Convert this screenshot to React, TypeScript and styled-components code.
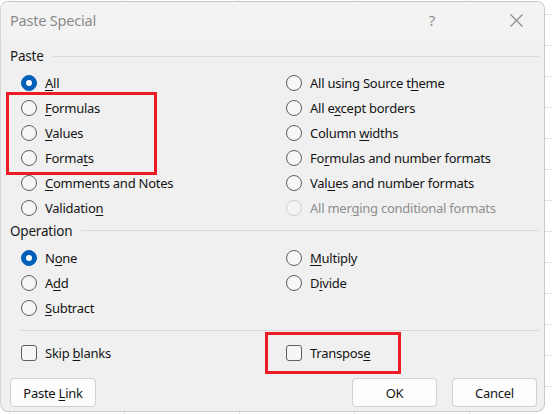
import React, { FC } from "react";
import styled, { createGlobalStyle } from "styled-components";

const GlobalStyle = createGlobalStyle`
  html, body {
    margin: 0;
    padding: 0;
    width: 552px;
    height: 414px;
    overflow: hidden;
    background-color: #ffffff;
    background-image:
      linear-gradient(#e2e2e2 1px, transparent 1px),
      linear-gradient(90deg, #e2e2e2 1px, transparent 1px);
    background-size: 100% 31px, 115px 100%;
    background-position: 0 14px, 9px 0;
    font-family: "Noto Sans", "Open Sans", sans-serif;
  }
`;

const Page = styled.div`
  width: 552px;
  height: 414px;
  padding: 1px 0 0 0;
  box-sizing: border-box;
`;

const Dialog = styled.div`
  position: relative;
  width: 545px;
  height: 411px;
  box-sizing: border-box;
  border: 1px solid #c9c9c9;
  border-left: 1px solid #d6d6d6;
  border-radius: 8px;
  background: #f0f0f0;
  overflow: hidden;
  display: flex;
  flex-direction: column;
`;

const TitleBar = styled.div`
  height: 38px;
  flex: none;
  box-sizing: border-box;
  display: flex;
  align-items: center;
  padding: 0 0 2px 9px;
  background: #f3f3f3;
`;

const Title = styled.div`
  flex: 1;
  font-size: 14.5px;
  letter-spacing: -0.2px;
  color: #8a8a8a;
`;

const TitleButton = styled.div<{ $w: number; $gap?: number }>`
  width: ${(p) => p.$w}px;
  height: 36px;
  margin-right: ${(p) => p.$gap ?? 0}px;
  display: flex;
  align-items: center;
  justify-content: center;
  color: #8f8f8f;
  font-size: 15px;
`;

const Body = styled.div`
  flex: 1;
  display: flex;
  flex-direction: column;
  padding: 6px 5px 0 9px;
`;

const SectionHead = styled.div`
  height: 20px;
  display: flex;
  align-items: center;
  gap: 9px;
  font-size: 13.5px;
  letter-spacing: -0.2px;
  color: #1a1a1a;

  &::after {
    content: "";
    flex: 1;
    height: 1px;
    background: #d9d9d9;
  }
`;

const OptionGrid = styled.div<{ $rows: number }>`
  margin-top: 4.5px;
  padding-left: 11px;
  display: grid;
  grid-template-columns: 265px 1fr;
  grid-template-rows: repeat(${(p) => p.$rows}, 25px);
  grid-auto-flow: column;
`;

const Option = styled.label<{ $disabled?: boolean }>`
  display: flex;
  align-items: center;
  gap: 8px;
  font-size: 13px;
  letter-spacing: -0.25px;
  color: ${(p) => (p.$disabled ? "#8d8d8d" : "#141414")};
  white-space: nowrap;

  u {
    text-decoration-thickness: 1px;
    text-underline-offset: 2px;
  }
`;

const Radio = styled.span<{ $checked?: boolean; $disabled?: boolean }>`
  width: 16px;
  height: 16px;
  flex: none;
  box-sizing: border-box;
  border-radius: 50%;
  border: 1px solid
    ${(p) => (p.$checked ? "#005fb8" : p.$disabled ? "#d0d0d0" : "#5f5f5f")};
  background: ${(p) => (p.$checked ? "#005fb8" : p.$disabled ? "#f4f4f4" : "#f6f6f6")};
  display: flex;
  align-items: center;
  justify-content: center;

  &::after {
    content: "";
    display: ${(p) => (p.$checked ? "block" : "none")};
    width: 6px;
    height: 6px;
    border-radius: 50%;
    background: #ffffff;
  }
`;

const Checkbox = styled.span`
  width: 16px;
  height: 16px;
  flex: none;
  box-sizing: border-box;
  border-radius: 3px;
  border: 1px solid #5f5f5f;
  background: #f6f6f6;
`;

const Separator = styled.div`
  margin: 10px 0 0 10px;
  height: 1px;
  background: #d9d9d9;
`;

const CheckRow = styled.div`
  margin-top: 10px;
  height: 24px;
  padding-left: 11px;
  display: grid;
  grid-template-columns: 265px 1fr;
`;

const ButtonRow = styled.div`
  margin-top: 13px;
  display: flex;
  gap: 15px;
  padding-right: 2px;
`;

const Button = styled.div<{ $w: number; $push?: boolean }>`
  width: ${(p) => p.$w}px;
  height: 29px;
  box-sizing: border-box;
  margin-left: ${(p) => (p.$push ? "auto" : "0")};
  background: #fdfdfd;
  border: 1px solid #d0d0d0;
  border-radius: 4px;
  display: flex;
  align-items: center;
  justify-content: center;
  font-size: 13px;
  letter-spacing: -0.25px;
  color: #141414;
  white-space: pre;

  u {
    text-decoration-thickness: 1px;
    text-underline-offset: 2px;
  }
`;

const Highlight = styled.div<{ $x: number; $y: number; $w: number; $h: number }>`
  position: absolute;
  left: ${(p) => p.$x}px;
  top: ${(p) => p.$y}px;
  width: ${(p) => p.$w}px;
  height: ${(p) => p.$h}px;
  box-sizing: border-box;
  border: 3px solid #ed1c24;
  pointer-events: none;
`;

type Opt = { label: React.ReactNode; checked?: boolean; disabled?: boolean };

const pasteOptions: Opt[] = [
  { label: <><u>A</u>ll</>, checked: true },
  { label: <><u>F</u>ormulas</> },
  { label: <><u>V</u>alues</> },
  { label: <>Forma<u>t</u>s</> },
  { label: <><u>C</u>omments and Notes</> },
  { label: <>Validatio<u>n</u></> },
  { label: <>All using Source t<u>h</u>eme</> },
  { label: <>All e<u>x</u>cept borders</> },
  { label: <>Column <u>w</u>idths</> },
  { label: <>Fo<u>r</u>mulas and number formats</> },
  { label: <>Val<u>u</u>es and number formats</> },
  { label: <>All mer<u>g</u>ing conditional formats</>, disabled: true },
];

const operationOptions: Opt[] = [
  { label: <>N<u>o</u>ne</>, checked: true },
  { label: <>A<u>d</u>d</> },
  { label: <><u>S</u>ubtract</> },
  { label: <><u>M</u>ultiply</> },
  { label: <>D<u>i</u>vide</> },
];

const CloseIcon: FC = () => (
  <svg width="13" height="13" viewBox="0 0 13 13">
    <path d="M0.5 0.5 L12.5 12.5 M12.5 0.5 L0.5 12.5" stroke="#8a8a8a" strokeWidth="1.1" fill="none" />
  </svg>
);

const Options: FC<{ items: Opt[]; rows: number }> = ({ items, rows }) => (
  <OptionGrid $rows={rows}>
    {items.map((o, i) => (
      <Option key={i} $disabled={o.disabled}>
        <Radio $checked={o.checked} $disabled={o.disabled} />
        <span>{o.label}</span>
      </Option>
    ))}
  </OptionGrid>
);

const App: FC = () => (
  <Page>
    <GlobalStyle />
    <Dialog>
      <TitleBar>
        <Title>Paste Special</Title>
        <TitleButton $w={46} $gap={33}>?</TitleButton>
        <TitleButton $w={56}>
          <CloseIcon />
        </TitleButton>
      </TitleBar>
      <Body>
        <SectionHead>Paste</SectionHead>
        <Options items={pasteOptions} rows={6} />
        <SectionHead>Operation</SectionHead>
        <Options items={operationOptions} rows={3} />
        <Separator />
        <CheckRow>
          <Option>
            <Checkbox />
            <span>Skip <u>b</u>lanks</span>
          </Option>
          <Option>
            <Checkbox />
            <span>Transpos<u>e</u></span>
          </Option>
        </CheckRow>
        <ButtonRow>
          <Button $w={86}>
            <span>Paste <u>L</u>ink</span>
          </Button>
          <Button $w={85} $push>OK</Button>
          <Button $w={85}>Cancel</Button>
        </ButtonRow>
      </Body>
      <Highlight $x={5} $y={90} $w={151} $h={83} />
      <Highlight $x={264} $y={330} $w={136} $h={42} />
    </Dialog>
  </Page>
);

export default App;
